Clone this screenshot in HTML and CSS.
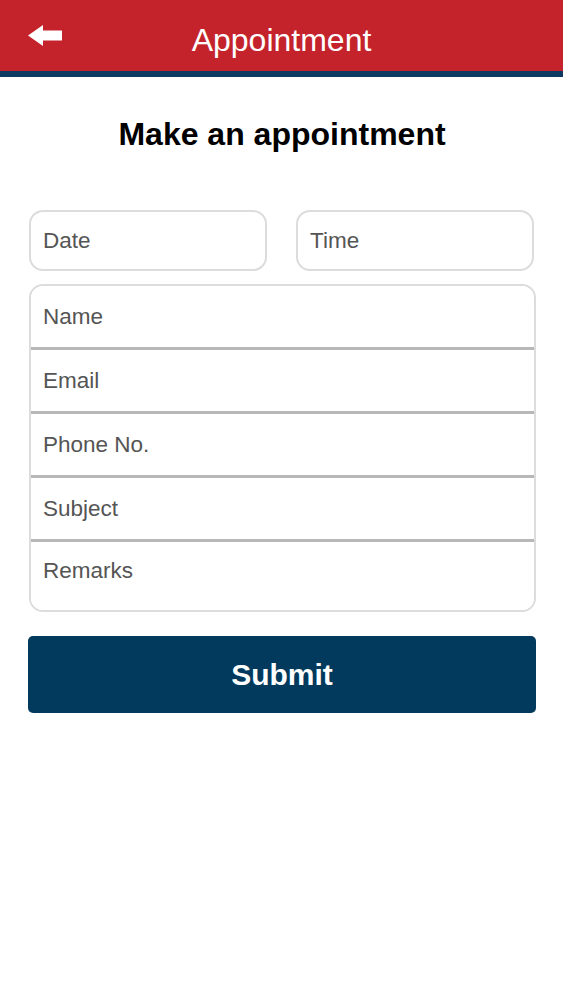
FILE: index.html
```html
<!DOCTYPE html>
<html lang="en">
<head>
    <meta charset="UTF-8">
    <meta name="viewport" content="width=device-width, initial-scale=1.0">
    <title>Appointment</title>
    <link rel="stylesheet" href="styles.css">
</head>
<body>
    <div class="header">
        <a class="back" href="#">
            <svg width="34" height="21" viewBox="0 0 34 21">
                <path d="M0 10.5 L15 0 L15 5.5 L34 5.5 L34 15.5 L15 15.5 L15 21 Z" fill="#fff"/>
            </svg>
        </a>
        <div class="title">Appointment</div>
    </div>

    <div class="container">
        <h1>Make an appointment</h1>

        <div class="row-pair">
            <input type="text" class="small-input" placeholder="Date">
            <input type="text" class="small-input" placeholder="Time">
        </div>

        <div class="field-group">
            <input type="text" class="field" placeholder="Name">
            <input type="text" class="field" placeholder="Email">
            <input type="text" class="field" placeholder="Phone No.">
            <input type="text" class="field" placeholder="Subject">
            <textarea class="field remarks" placeholder="Remarks"></textarea>
        </div>

        <button class="submit">Submit</button>
    </div>
</body>
</html>
```

FILE: styles.css
```css
body {
    font-family: "Liberation Sans", Arial, sans-serif;
    margin: 0;
    background-color: #fff;
    color: #000;
}
.header {
    height: 71px;
    background-color: #c4232b;
    border-bottom: 6px solid #0d3a62;
    display: flex;
    align-items: center;
    justify-content: center;
    position: relative;
}
.back {
    position: absolute;
    left: 28px;
    top: 25px;
    display: block;
    line-height: 0;
}
.title {
    color: #fff;
    font-size: 32px;
    margin-top: 9px;
}
.container {
    padding: 0 27px 0 28px;
}
h1 {
    font-size: 32px;
    font-weight: bold;
    text-align: center;
    margin: 39px 0 57px;
}
.row-pair {
    display: flex;
    gap: 29px;
    padding: 0 2px 0 1px;
}
.small-input {
    flex: 1;
    min-width: 0;
    height: 61px;
    box-sizing: border-box;
    border: 2px solid #dcdcdc;
    border-radius: 14px;
    padding: 0 12px;
    font-family: inherit;
    font-size: 22.5px;
    color: #333;
    outline: none;
}
.small-input::placeholder,
.field::placeholder {
    color: #555;
}
.field-group {
    margin-top: 13px;
    margin-left: 1px;
    border: 2px solid #dcdcdc;
    border-radius: 14px;
    overflow: hidden;
    display: flex;
    flex-direction: column;
}
.field {
    height: 64px;
    box-sizing: border-box;
    border: none;
    border-bottom: 3px solid #b8b8b8;
    padding: 0 12px;
    font-family: inherit;
    font-size: 22.5px;
    color: #333;
    outline: none;
    display: block;
    width: 100%;
}
.remarks {
    height: 68px;
    border-bottom: none;
    padding-top: 16px;
    resize: none;
    line-height: 26px;
}
.submit {
    display: block;
    width: 100%;
    height: 77px;
    margin-top: 24px;
    background-color: #023a5e;
    color: #fff;
    border: none;
    border-radius: 5px;
    font-family: inherit;
    font-size: 30px;
    font-weight: bold;
    cursor: pointer;
}
```
